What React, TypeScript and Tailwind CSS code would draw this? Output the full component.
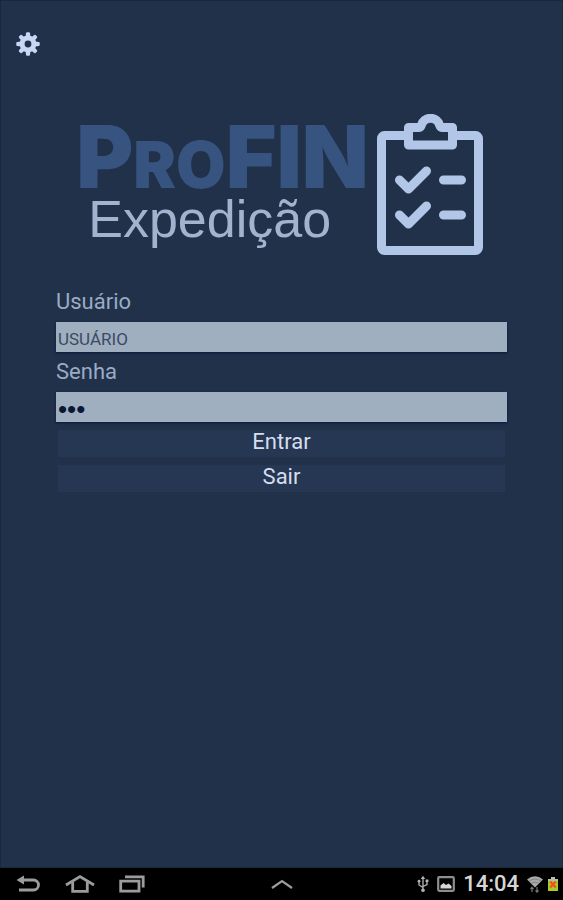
import { useState, type FormEvent } from 'react'

const gearTeeth = [0, 45, 90, 135, 180, 225, 270, 315]

function GearIcon() {
  return (
    <svg viewBox="0 0 24 24" className="w-6 h-6" fill="#c6d8f4" aria-hidden="true">
      {gearTeeth.map((angle) => (
        <path key={angle} d="M9.6 5.5 10 1.2Q10.2.3 11 .3H13Q13.8.3 14 1.2L14.4 5.5Z" transform={`rotate(${angle} 12 12)`} />
      ))}
      <circle cx="12" cy="12" r="5.9" fill="none" stroke="#c6d8f4" strokeWidth="5" />
    </svg>
  )
}

function ClipboardIcon() {
  return (
    <svg
      viewBox="0 0 106 142"
      className="w-[106px] h-[142px] shrink-0"
      fill="none"
      stroke="#b2c6e8"
      strokeWidth="9"
      strokeLinecap="round"
      strokeLinejoin="round"
      aria-hidden="true"
    >
      <rect x="4.5" y="21.5" width="97" height="115" rx="3" />
      <path
        d="M31.5 13.5H41.5Q43.5 13.5 44.2 11.5A9.6 9.6 0 0 1 62.8 11.5Q63.5 13.5 65.5 13.5H75.5V31H31.5Z"
        fill="#21314a"
      />
      <path d="M22.5 66 31.5 75 49.5 57" />
      <path d="M22.5 101 31.5 110 49.5 92" />
      <path d="M66.5 66H84.5M66.5 101H84.5" />
    </svg>
  )
}

function Logo() {
  return (
    <div className="flex items-center justify-center gap-2 pr-1">
      <div>
        <h1 className="font-['Inter',sans-serif] font-black text-[87px] leading-[64px] text-[#36547f] whitespace-nowrap">
          P<span className="text-[64px] leading-[48px]">RO</span>FIN
        </h1>
        <p className="mt-1 pl-3 font-['Liberation_Sans',sans-serif] text-[52px] leading-[52px] text-[#a3b3cf]">Expedição</p>
      </div>
      <ClipboardIcon />
    </div>
  )
}

function LoginForm() {
  const [usuario, setUsuario] = useState('')
  const [senha, setSenha] = useState('123')

  const handleSubmit = (e: FormEvent) => {
    e.preventDefault()
  }

  const labelClass = 'block text-[22px] leading-7 text-[#9aabc4]'
  const inputClass =
    'block w-full h-[30px] px-0.5 pt-1 bg-[#a0afc0] text-[#0a1836] placeholder:text-[#3a4a63] placeholder:opacity-100 shadow-[0_1px_2px_#0a1a3c] outline-none'
  const buttonClass = 'block w-full h-[27px] pb-1 bg-[#263753] text-[22px] leading-6 text-[#d5deec]'

  return (
    <form onSubmit={handleSubmit} className="px-[55px] mt-8">
      <label htmlFor="usuario" className={labelClass}>Usuário</label>
      <input
        id="usuario"
        type="text"
        placeholder="USUÁRIO"
        value={usuario}
        onChange={(e) => setUsuario(e.target.value)}
        className={`${inputClass} mt-1.5 text-[17px]`}
      />
      <label htmlFor="senha" className={`${labelClass} mt-1.5`}>Senha</label>
      <input
        id="senha"
        type="password"
        value={senha}
        onChange={(e) => setSenha(e.target.value)}
        className={`${inputClass} mt-1.5 font-['Liberation_Sans',sans-serif] text-[26px]`}
      />
      <div className="flex flex-col gap-2 px-0.5 mt-2">
        <button type="submit" className={buttonClass}>Entrar</button>
        <button type="button" className={buttonClass}>Sair</button>
      </div>
    </form>
  )
}

function SystemBar() {
  return (
    <footer className="grid grid-cols-[1fr_auto_1fr] items-center h-8 px-1 bg-black">
      <div className="flex items-center gap-6 pl-3">
        <button type="button" aria-label="Voltar">
          <svg viewBox="0 0 25 20" className="w-[25px] h-5" fill="none" stroke="#9c9c9c" strokeWidth="2.8">
            <path d="M6 6H17.5A5 5 0 0 1 17.5 16H3" />
            <path d="M8 1.5V10.5L.5 6Z" fill="#9c9c9c" stroke="none" />
          </svg>
        </button>
        <button type="button" aria-label="Início">
          <svg viewBox="0 0 30 20" className="w-[30px] h-5" fill="none" stroke="#9c9c9c" strokeWidth="2.8">
            <path d="M1 11 15 2.6 29 11" />
            <path d="M7.7 8V17.3H22.3V8" />
          </svg>
        </button>
        <button type="button" aria-label="Recentes">
          <svg viewBox="0 0 26 20" className="w-[26px] h-5" fill="none" stroke="#9c9c9c" strokeWidth="2.8">
            <path d="M1.7 7.2H20V17.2H1.7Z" />
            <path d="M6 2.8H24.2V13.5" />
          </svg>
        </button>
      </div>
      <button type="button" aria-label="Expandir">
        <svg viewBox="0 0 22 10" className="w-[22px] h-2.5" fill="none" stroke="#9c9c9c" strokeWidth="2.2">
          <path d="M1 9 11 2 21 9" />
        </svg>
      </button>
      <div className="flex items-center justify-end gap-2 text-[#d6d6d6]">
        <svg viewBox="0 0 12 18" className="w-3 h-[18px]" fill="none" stroke="#b4b4b4" strokeWidth="1.3" aria-hidden="true">
          <path d="M6 3V15M6 12.5 2 10V6.5M6 11.5 10 9.5V6" />
          <path d="M3.8 4 6 .8 8.2 4ZM8.6 4.5H11.4V7H8.6Z" fill="#b4b4b4" stroke="none" />
          <circle cx="2" cy="6.2" r="1.4" fill="#b4b4b4" stroke="none" />
          <circle cx="6" cy="15.3" r="1.8" fill="#b4b4b4" stroke="none" />
        </svg>
        <svg viewBox="0 0 18 16" className="w-[18px] h-4" aria-hidden="true">
          <rect x="1.2" y="1.2" width="15.6" height="13.6" rx="1" fill="none" stroke="#8e8e8e" strokeWidth="2.2" />
          <path d="M3.5 12.5V9.5L6.5 7 9 9 11.5 7.5 14.5 10V12.5Z" fill="#d6d6d6" />
        </svg>
        <time className="text-[22px] leading-8 font-medium">14:04</time>
        <div className="flex items-center gap-1">
          <svg viewBox="0 0 16 18" className="w-4 h-[18px]" aria-hidden="true">
            <path d="M0 4.5Q8-2 16 4.5L8 12.5Z" fill="#a8a8a8" />
            <path d="M2 6.2Q8 1.8 14 6.2M4.5 8.2Q8 5.8 11.5 8.2" fill="none" stroke="#777" strokeWidth="0.8" />
            <path d="M5 17V12.5M3.5 14 5 12.3 6.5 14M10 12V17M8.5 15.4 10 17.2 11.5 15.4" fill="none" stroke="#777" strokeWidth="1.2" />
          </svg>
          <svg viewBox="0 0 12 16" className="w-3 h-4" aria-hidden="true">
            <path d="M4 1H8V3H11V15H1V3H4Z" fill="#a4cc2c" />
            <path d="M4 1H8V3H11V5H1V3H4Z" fill="#b7bfa8" />
            <path d="M3.2 5.5 8.8 11.5M8.8 5.5 3.2 11.5" stroke="#f4511e" strokeWidth="2.4" />
          </svg>
        </div>
      </div>
    </footer>
  )
}

export default function App() {
  return (
    <div className="flex flex-col min-h-screen font-['Roboto',sans-serif] bg-[#21314a]">
      <main className="flex-1 border border-[#152a3a]">
        <div className="px-[15px] pt-[31px]">
          <button type="button" aria-label="Configurações" className="block">
            <GearIcon />
          </button>
        </div>
        <div className="mt-[58px]">
          <Logo />
        </div>
        <LoginForm />
      </main>
      <SystemBar />
    </div>
  )
}
